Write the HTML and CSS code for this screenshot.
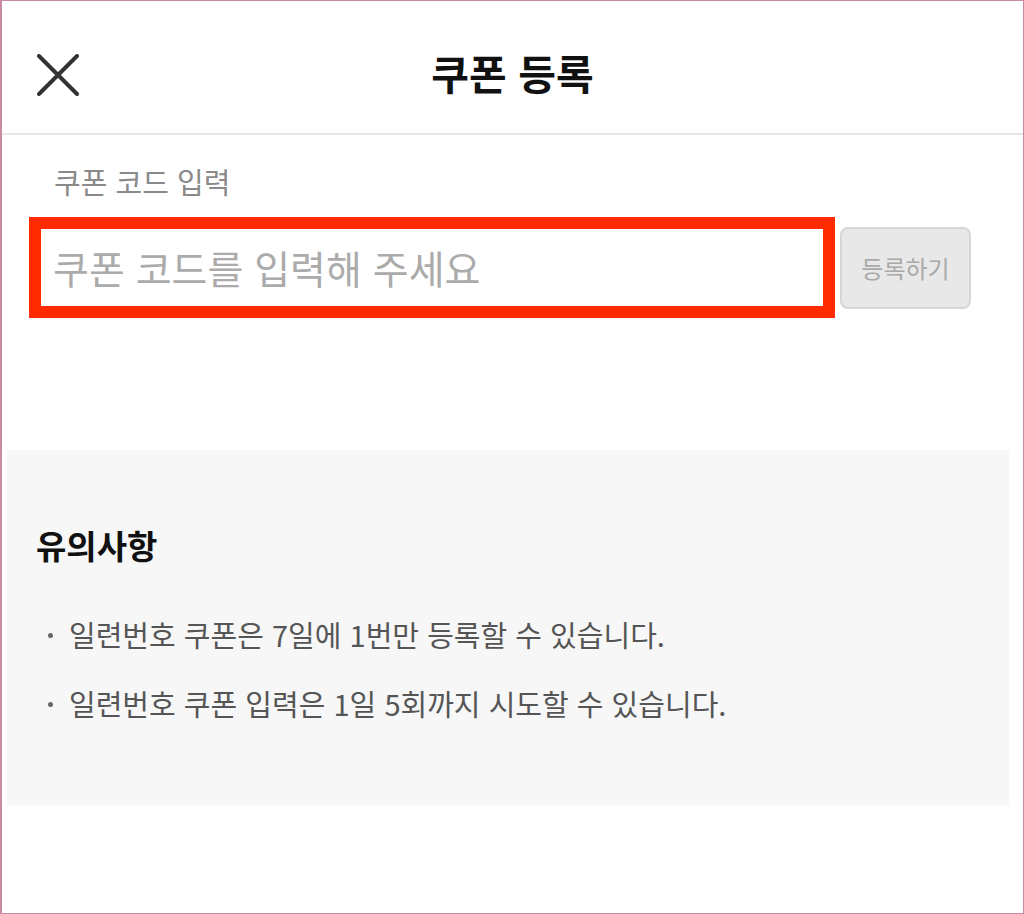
FILE: index.html
```html
<!DOCTYPE html>
<html lang="ko">
<head>
    <meta charset="UTF-8">
    <title>쿠폰 등록</title>
    <link rel="stylesheet" href="styles.css">
</head>
<body>
    <div class="screen">
        <div class="topbar">
            <button class="close" type="button" aria-label="닫기">
                <svg width="42" height="42" viewBox="0 0 42 42">
                    <path d="M2 2 L40 40 M40 2 L2 40" stroke="#333" stroke-width="4" stroke-linecap="round" fill="none"/>
                </svg>
            </button>
            <h1 class="title">쿠폰 등록</h1>
            <span></span>
        </div>

        <div class="coupon">
            <p class="label">쿠폰 코드 입력</p>
            <div class="row">
                <input class="code" type="text" placeholder="쿠폰 코드를 입력해 주세요">
                <button class="submit" type="button" disabled>등록하기</button>
            </div>
        </div>

        <div class="notice">
            <h2>유의사항</h2>
            <ul>
                <li>일련번호 쿠폰은 7일에 1번만 등록할 수 있습니다.</li>
                <li>일련번호 쿠폰 입력은 1일 5회까지 시도할 수 있습니다.</li>
            </ul>
        </div>
    </div>
</body>
</html>
```

FILE: styles.css
```css
html, body{
    margin: 0;
    padding: 0;
    background: #fff;
}
body{
    font-family: "Noto Sans CJK KR", "Noto Sans", sans-serif;
}
.screen{
    box-sizing: border-box;
    height: 914px;
    border: 1px solid #c98aa5;
    border-left-width: 2px;
}
.topbar{
    display: grid;
    grid-template-columns: 1fr auto 1fr;
    align-items: center;
    height: 134px;
    padding-top: 10px;
    box-sizing: border-box;
    border-bottom: 2px solid #e6e6e6;
}
.close{
    justify-self: start;
    margin-left: 35px;
    margin-top: 6px;
    padding: 0;
    border: 0;
    background: none;
    width: 42px;
    height: 42px;
}
.title{
    margin: 0;
    font-size: 41px;
    font-weight: 700;
    color: #111;
    letter-spacing: 0;
}
.coupon{
    padding: 26px 0 0 27px;
    height: 315px;
    box-sizing: border-box;
}
.label{
    margin: 0 0 16px 25px;
    font-size: 29px;
    line-height: 40px;
    color: #8a8a8a;
}
.row{
    display: flex;
    align-items: center;
}
.code{
    box-sizing: border-box;
    width: 806px;
    height: 101px;
    border: 12px solid #ff2a00;
    padding: 0 0 2px 12px;
    font-family: inherit;
    font-size: 39px;
    color: #333;
    outline: none;
}
.code::placeholder{
    color: #ababab;
}
.submit{
    box-sizing: border-box;
    width: 131px;
    height: 82px;
    margin-left: 5px;
    border: 2px solid #d6d6d6;
    border-radius: 8px;
    background: #e8e8e8;
    color: #a9a9a9;
    font-family: inherit;
    font-size: 24px;
    padding: 0;
}
.notice{
    margin: 0 14px 0 5px;
    height: 355px;
    box-sizing: border-box;
    background: #f7f7f7;
    padding: 71px 0 0 29px;
}
.notice h2{
    margin: 0 0 44px;
    font-size: 33px;
    line-height: 48px;
    font-weight: 700;
    color: #111;
}
.notice ul{
    list-style: none;
    margin: 0;
    padding: 0 0 0 12px;
}
.notice li{
    position: relative;
    padding-left: 21px;
    font-size: 29px;
    line-height: 42px;
    color: #555;
    margin-bottom: 27px;
}
.notice li::before{
    content: "";
    position: absolute;
    left: 0;
    top: 20px;
    width: 5px;
    height: 5px;
    border-radius: 50%;
    background: #666;
}
```
